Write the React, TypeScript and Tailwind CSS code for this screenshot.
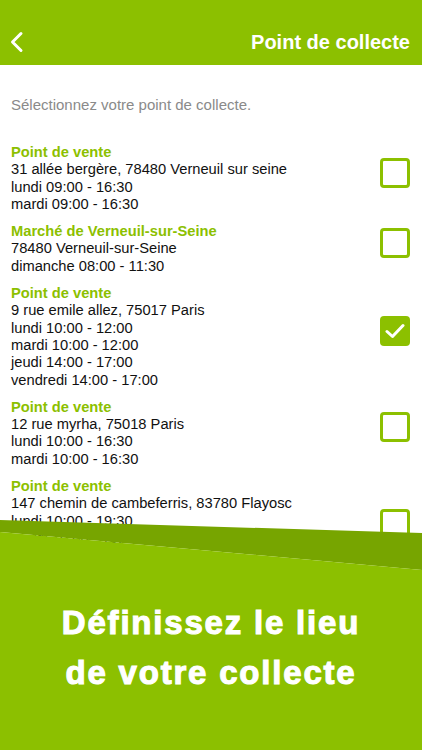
import React from "react";

type Point = {
  title: string;
  lines: string[];
  checked?: boolean;
};

const points: Point[] = [
  {
    title: "Point de vente",
    lines: ["31 allée bergère, 78480 Verneuil sur seine", "lundi 09:00 - 16:30", "mardi 09:00 - 16:30"],
  },
  {
    title: "Marché de Verneuil-sur-Seine",
    lines: ["78480 Verneuil-sur-Seine", "dimanche 08:00 - 11:30"],
  },
  {
    title: "Point de vente",
    lines: [
      "9 rue emile allez, 75017 Paris",
      "lundi 10:00 - 12:00",
      "mardi 10:00 - 12:00",
      "jeudi 14:00 - 17:00",
      "vendredi 14:00 - 17:00",
    ],
    checked: true,
  },
  {
    title: "Point de vente",
    lines: ["12 rue myrha, 75018 Paris", "lundi 10:00 - 16:30", "mardi 10:00 - 16:30"],
  },
  {
    title: "Point de vente",
    lines: [
      "147 chemin de cambeferris, 83780 Flayosc",
      "lundi 10:00 - 19:30",
      "mardi 10:00 - 19:30",
      "jeudi 10:00 - 19:30",
      "vendredi 10:00 - 19:30",
    ],
  },
];

const Checkbox: React.FC<{ checked?: boolean }> = ({ checked }) => (
  <div
    className={
      checked
        ? "w-[30px] h-[30px] rounded-[4px] bg-[#8cc000] flex items-center justify-center mb-3"
        : "w-[30px] h-[30px] rounded-[4px] border-[3px] border-[#8cc000] mb-3"
    }
  >
    {checked && (
      <svg width="20" height="16" viewBox="0 0 20 16" fill="none">
        <polyline
          points="2,8.5 7.5,13.5 18,2.5"
          stroke="white"
          strokeWidth="3"
          strokeLinecap="round"
          strokeLinejoin="round"
        />
      </svg>
    )}
  </div>
);

const App: React.FC = () => {
  return (
    <div className="relative w-[422px] h-[750px] overflow-hidden bg-white font-['Liberation_Sans',Arial,sans-serif]">
      {/* Header */}
      <div className="h-[65px] bg-[#8cc000] flex items-center justify-between pl-[9px] pr-[12px] pt-[18px]">
        <svg width="16" height="22" viewBox="0 0 16 22" fill="none">
          <polyline
            points="12,2.5 3.5,11 12,19.5"
            stroke="white"
            strokeWidth="3"
            strokeLinecap="round"
            strokeLinejoin="round"
          />
        </svg>
        <h1 className="text-white font-bold text-[20px] leading-none">Point de collecte</h1>
      </div>

      <p className="mt-[31px] px-[11px] text-[15px] leading-[18px] text-[#8a8a8a]">
        Sélectionnez votre point de collecte.
      </p>

      {/* List */}
      <div className="mt-[30px] flex flex-col gap-[10px] pl-[11px] pr-[12px]">
        {points.map((p, i) => (
          <div key={i} className="flex items-center justify-between">
            <div className="text-[14.7px] leading-[17.3px] text-[#111]">
              <div className="font-bold text-[#8cc000]">{p.title}</div>
              {p.lines.map((l, j) => (
                <div key={j}>{l}</div>
              ))}
            </div>
            <Checkbox checked={p.checked} />
          </div>
        ))}
      </div>

      {/* Bottom banner */}
      <div className="absolute left-0 right-0 top-[520px] bottom-0">
        <svg className="absolute inset-0" width="422" height="230" viewBox="0 0 422 230" preserveAspectRatio="none">
          <polygon points="0,0 422,13 422,50 0,12" fill="#77a500" />
          <polygon points="0,12 422,50 422,230 0,230" fill="#8cc000" />
        </svg>
        <div className="relative pt-[78px] text-center text-white font-bold text-[33px] leading-[50px] tracking-[1.8px] [-webkit-text-stroke:1.1px_white]">
          <div>Définissez le lieu</div>
          <div>de votre collecte</div>
        </div>
      </div>
    </div>
  );
};

export default App;
